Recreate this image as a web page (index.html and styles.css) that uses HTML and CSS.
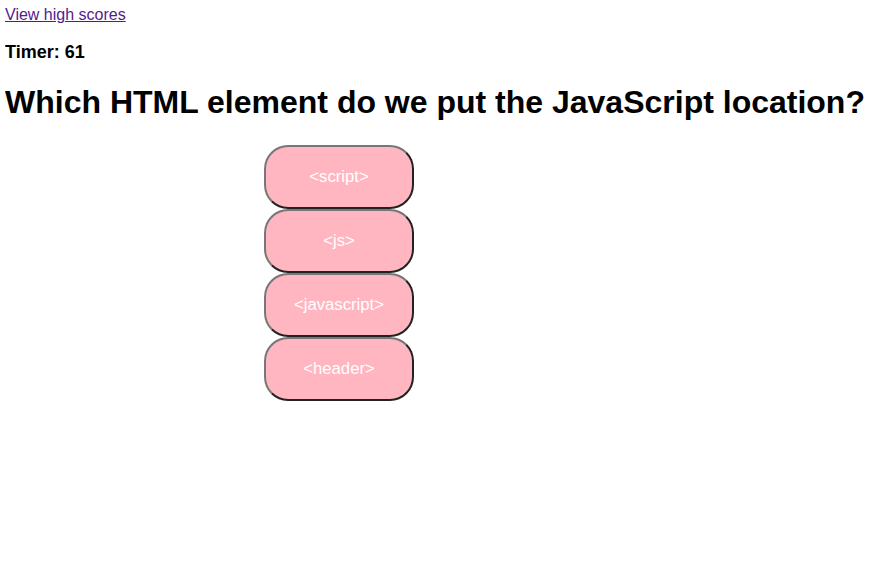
FILE: index.html
```html
<!DOCTYPE html>
<html>
<head>
<meta charset="utf-8">
<link rel="stylesheet" href="styles.css">
</head>
<body>
<a class="scores" href="#">View high scores</a>
<h4 class="timer">Timer: 61</h4>
<h1 class="question">Which HTML element do we put the JavaScript location?</h1>
<div class="choices">
  <button class="choice">&lt;script&gt;</button>
  <button class="choice">&lt;js&gt;</button>
  <button class="choice">&lt;javascript&gt;</button>
  <button class="choice">&lt;header&gt;</button>
</div>
</body>
</html>
```
FILE: styles.css
```css
body {
  margin: 6px 4px 8px 5px;
  font-family: "Liberation Sans", Arial, sans-serif;
  background: #fff;
  color: #000;
}
.scores {
  color: #551a8b;
  font-size: 16px;
}
.timer {
  font-size: 18px;
  margin: 18px 0 21px;
}
.question {
  font-size: 32px;
  margin: 21px 0 24px;
  white-space: nowrap;
}
.choices {
  display: flex;
  flex-direction: column;
  align-items: flex-start;
  padding-left: 259px;
}
.choice {
  width: 150px;
  height: 64px;
  margin: 0;
  background: #ffb6c1;
  color: #fff;
  font-family: "Liberation Sans", Arial, sans-serif;
  font-size: 16.7px;
  border: 2px solid;
  border-color: #777 #222 #222 #777;
  border-radius: 24px;
  padding: 0;
}
```
